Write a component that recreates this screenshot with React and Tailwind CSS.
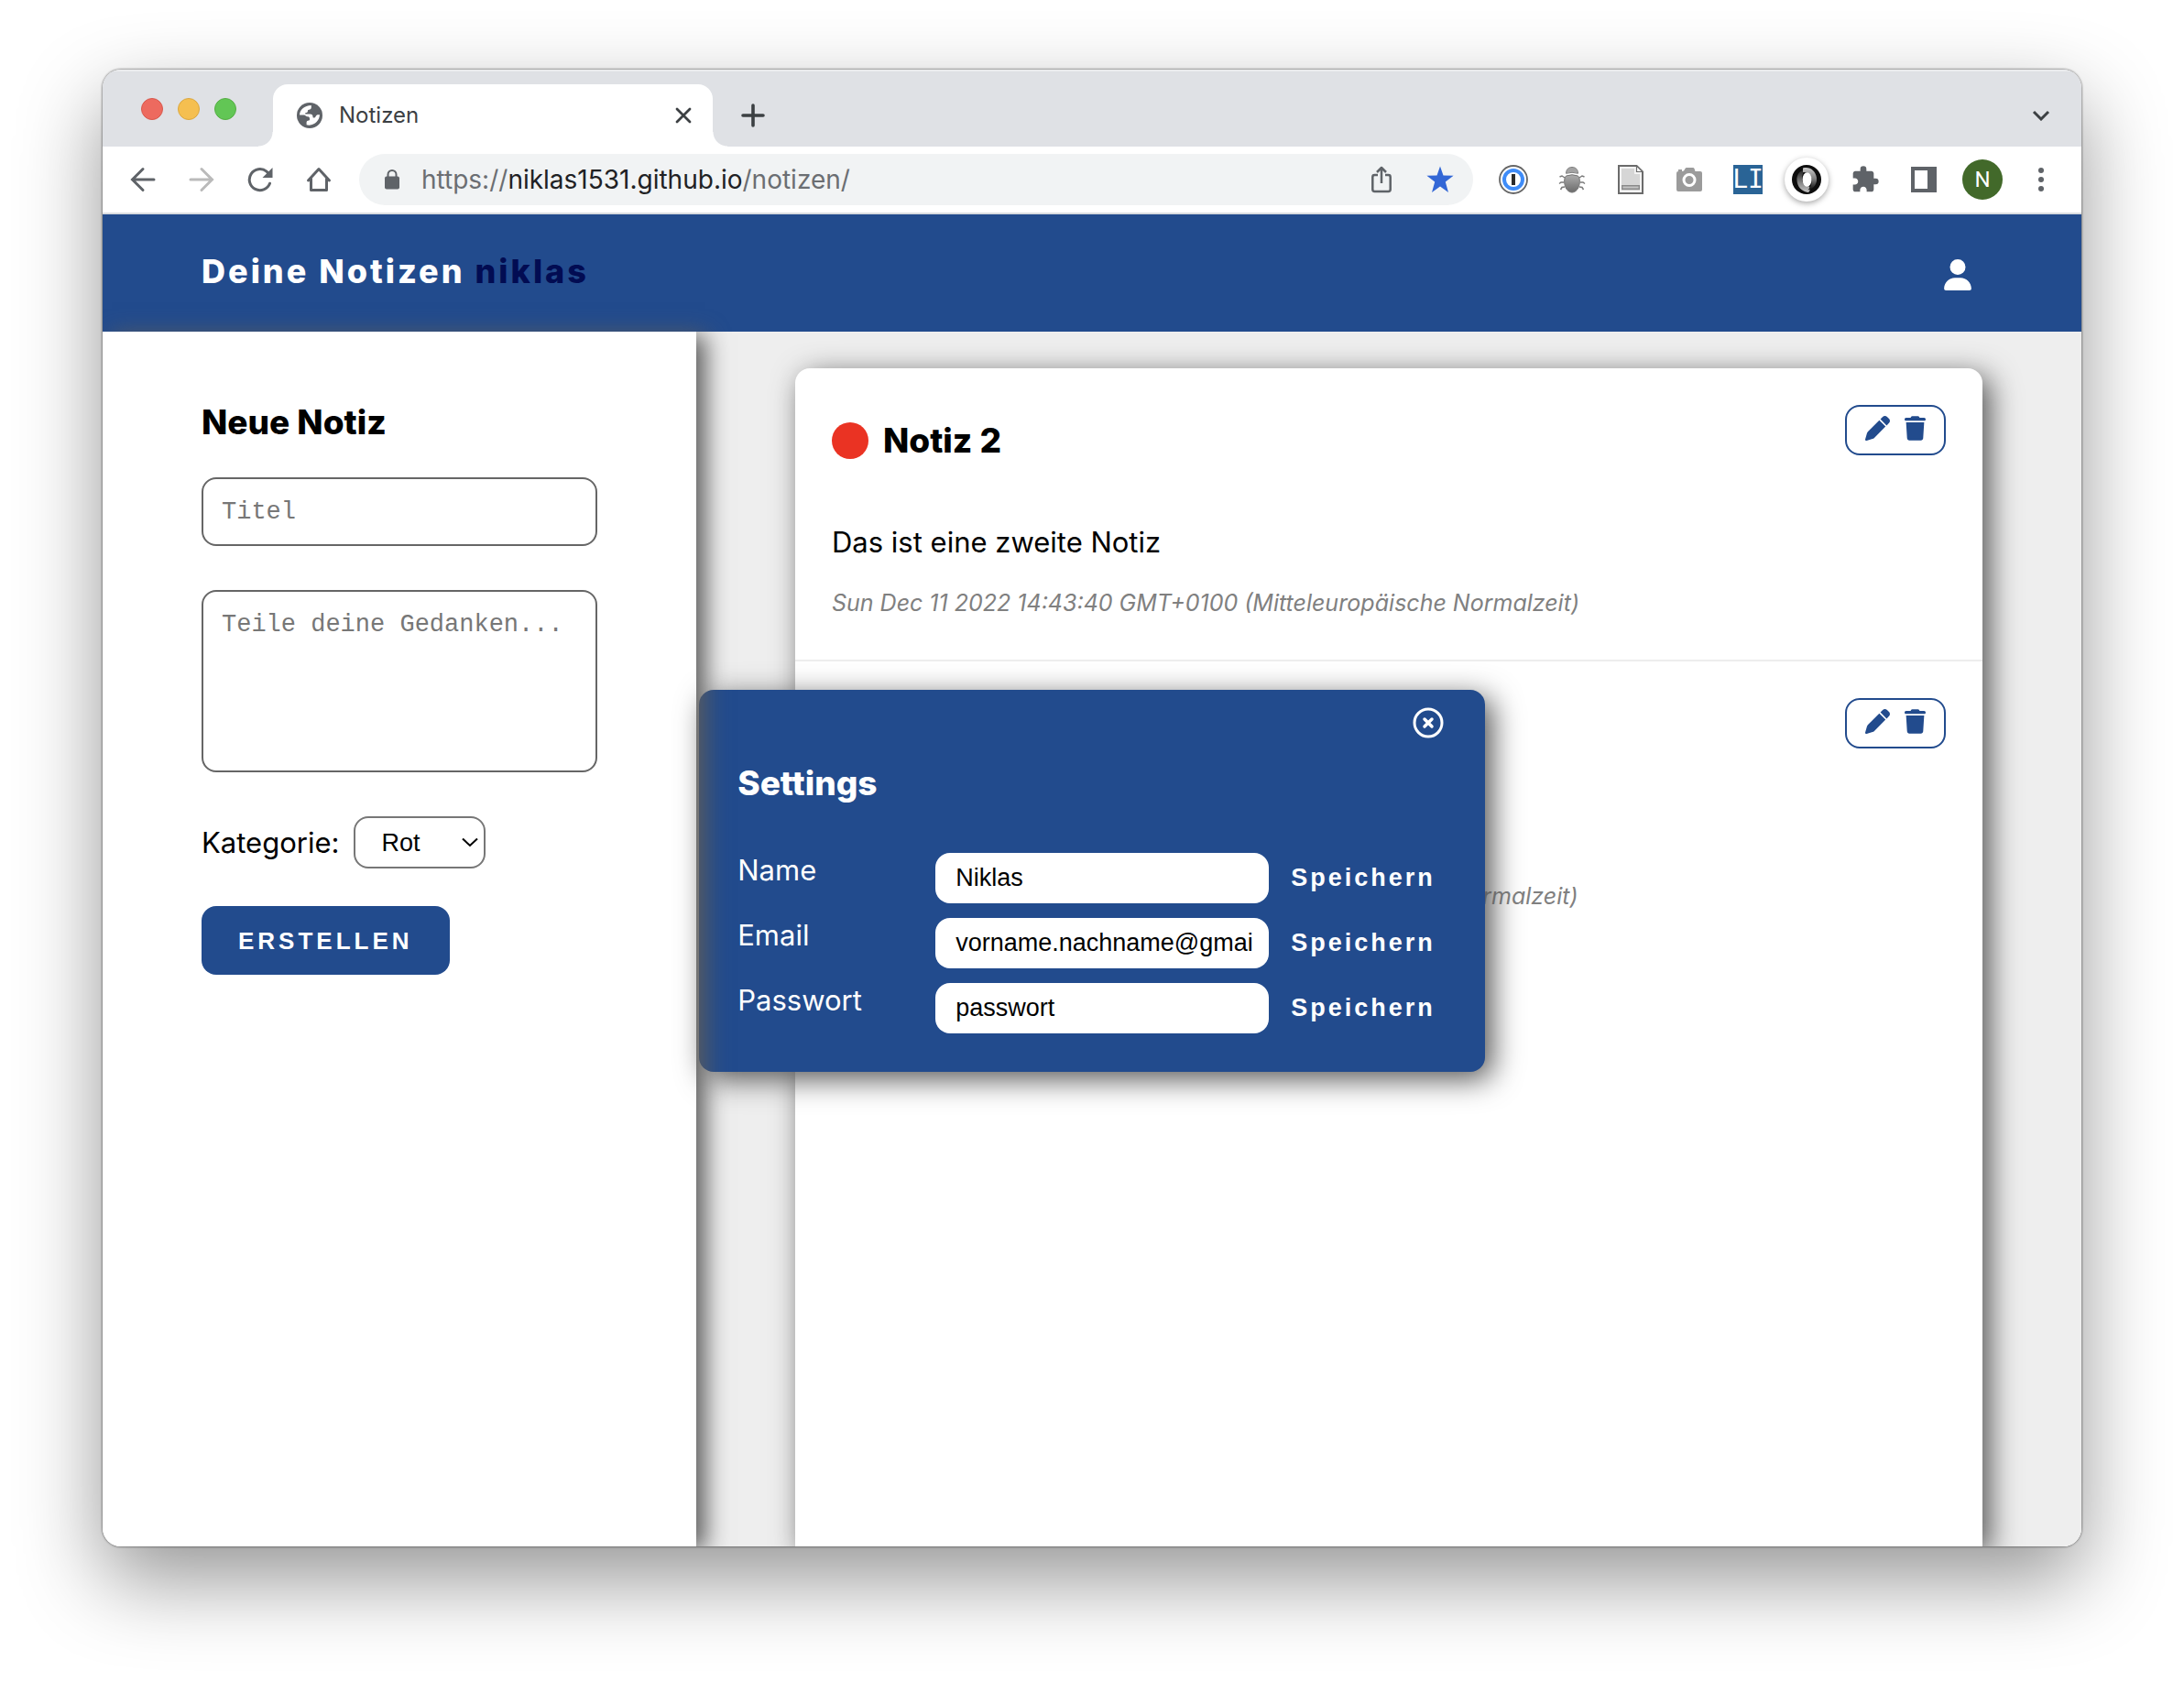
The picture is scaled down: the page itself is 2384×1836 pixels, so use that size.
import { FaPen, FaTrash, FaUser } from "react-icons/fa6";
import { MdExtension } from "react-icons/md";

const icon = { fill: "none", stroke: "currentColor", "aria-hidden": true };

function GlobeIcon() {
  return (
    <svg viewBox="0 0 28 28" className="h-7 w-7 shrink-0" aria-hidden="true">
      <circle cx="14" cy="14" r="14" fill="#5f6368" />
      <path
        d="M3 13.6C3.3 8 8 3.4 15.8 3.1v2.2c0 1.6-1 2.4-2.6 2.4-1.2 0-1.3.9-1.3 1.9 0 1.2-1.2 1.6-2.2 1.6-.9 0-.9 1.4.2 1.4h4.4c2.3 0 3.2 1.2 3.2 2.8 0 .9.5 1.2 1.5 1.2 1.600 0 1.500-2.200 3-3 .9-.5 2-.6 3-.3-.2 5.700-5 11.200-11.500 11.400-1.200 0-2-.2-2.900-.4v-2.700c0-1.400 1.200-2.200 2.400-2.200.8 0 1.100-.7 1.100-1.500 0-2.200-1.200-2.700-3-2.700-1.400 0-1.900-1.600-3.100-1.600z"
        fill="#fff"
      />
    </svg>
  );
}

function BackIcon() {
  return (
    <svg {...icon} viewBox="0 0 28 28" className="h-7 w-7" strokeWidth="3" strokeLinecap="round">
      <path d="M26 14H3M14 2.500 2.500 14 14 25.500" />
    </svg>
  );
}

function ForwardIcon() {
  return (
    <svg {...icon} viewBox="0 0 28 28" className="h-7 w-7" strokeWidth="3" strokeLinecap="round">
      <path d="M2 14h23M14 2.500 25.500 14 14 25.500" />
    </svg>
  );
}

function ReloadIcon() {
  return (
    <svg {...icon} viewBox="0 0 28 28" className="h-7 w-7" strokeWidth="3" strokeLinecap="round">
      <path d="M24.500 18.200A11.500 11.500 0 1 1 21 5.200l2 2" />
      <path d="M27.500 1v11h-11z" fill="currentColor" stroke="none" />
    </svg>
  );
}

function HomeIcon() {
  return (
    <svg {...icon} viewBox="0 0 28 28" className="h-7 w-7" strokeWidth="3" strokeLinejoin="round" strokeLinecap="round">
      <path d="M2.500 15 14 2.500 25.500 15M5.500 13v12.500h17V13" />
    </svg>
  );
}

function LockIcon() {
  return (
    <svg {...icon} viewBox="0 0 24 24" className="h-6 w-6 shrink-0 text-[#5f6368]" strokeWidth="2">
      <path d="M7.500 10V6.500a4.500 4.500 0 0 1 9 0V10" />
      <rect x="4" y="8.500" width="16" height="14" rx="2" fill="currentColor" stroke="none" />
    </svg>
  );
}

function ShareIcon() {
  return (
    <svg {...icon} viewBox="0 0 24 30" className="h-[30px] w-6" strokeWidth="2.500" strokeLinejoin="round">
      <path d="M8 10H4.500Q2.300 10 2.300 12.200v13.600q0 2.200 2.200 2.200h15q2.200 0 2.200-2.200V12.200q0-2.200-2.200-2.200H16M12 19V2.500M7 7l5-5 5 5" />
    </svg>
  );
}

function StarIcon() {
  return (
    <svg viewBox="0 0 30 30" className="h-[30px] w-[30px]" fill="#3367d6" aria-hidden="true">
      <path d="M15 .5l3.500 10.100 11.100.2-8.800 6.700 3.200 11.500L15 22.500 6 29l3.200-11.500L.4 10.800l11.100-.2z" />
    </svg>
  );
}

function KeyringIcon() {
  return (
    <svg viewBox="0 0 32 32" className="h-8 w-8" fill="none" aria-hidden="true">
      <circle cx="16" cy="16" r="15" fill="#fff" stroke="#666" strokeWidth="1.800" />
      <circle cx="16" cy="16" r="10" stroke="#3f8cf8" strokeWidth="4" />
      <path d="M14 10h4v12h-4z" fill="#2b2b2b" />
    </svg>
  );
}

function BugIcon() {
  return (
    <svg viewBox="0 0 30 30" className="h-[30px] w-[30px]" fill="none" aria-hidden="true">
      <defs>
        <linearGradient id="bug" x1="0" y1="0" x2="0" y2="1">
          <stop offset="0" stopColor="#adadad" />
          <stop offset="1" stopColor="#6b6b6b" />
        </linearGradient>
      </defs>
      <path d="M7 13l-3-2-2.500 1M6 18H3l-2 1.500M7 23l-3 .5L2.500 26M23 13l3-2 2.500 1M24 18h3l2 1.500M23 23l3 .5 1.500 2.500" stroke="#7a7a7a" strokeWidth="1.500" />
      <path d="M8.500 8.300C8.500 4 11 1.500 15 1.500s6.500 2.500 6.500 6.800q-6.500-2-13 0z" fill="#a3a3a3" stroke="#808080" />
      <path d="M8.500 11q6.500-2.500 13 0c2 2 2.300 6 1.500 9.500-1 5-4.500 8.500-8 8.500s-7-3.500-8-8.500C6.200 17 6.500 13 8.500 11z" fill="url(#bug)" stroke="#757575" />
    </svg>
  );
}

function PageIcon() {
  return (
    <svg viewBox="0 0 28 32" className="h-8 w-7" aria-hidden="true">
      <path d="M1 1h19.500L27 7.500V31H1z" fill="#f4f4f4" stroke="#6b6b6b" strokeWidth="2" />
      <path d="M4 4h14v6h6v18H4z" fill="#d6d6d6" />
      <path d="M20.500 1v6.500H27z" fill="#fff" stroke="#6b6b6b" strokeWidth="1.200" />
      <path d="M4.700 22.700h18.600v3.600H4.700z" fill="#c4c4c4" stroke="#8a8a8a" strokeWidth="1.400" />
    </svg>
  );
}

function CameraIcon() {
  return (
    <svg viewBox="0 0 30 28" className="h-7 w-[30px]" fill="#9b9b9b" aria-hidden="true">
      <path d="M3 5V3h4v2l2-.5L10.500 2Q11 1 12 1h7q1 0 1.500 1L21.500 5H27q2 0 2 2v18q0 2-2 2H3q-2 0-2-2V7q0-2 2-2z" />
      <circle cx="15" cy="14.500" r="6" stroke="#fff" strokeWidth="3" />
    </svg>
  );
}

function RingIcon() {
  return (
    <svg viewBox="0 0 32 32" className="h-8 w-8" aria-hidden="true">
      <defs>
        <linearGradient id="ringLeft" x1="0" y1="0" x2="0" y2="1">
          <stop offset="0" stopColor="#1c1c1c" />
          <stop offset="0.600" stopColor="#8a8a8a" />
          <stop offset="1" stopColor="#c4c4c4" />
        </linearGradient>
        <linearGradient id="ringRight" x1="0" y1="0" x2="0" y2="1">
          <stop offset="0" stopColor="#c9c9c9" />
          <stop offset="0.500" stopColor="#7d7d7d" />
          <stop offset="1" stopColor="#0a0a0a" />
        </linearGradient>
      </defs>
      <circle cx="16" cy="16" r="16" fill="#0d0d0d" />
      <path d="M14 5C8 6.500 5 11 5.500 17c.5 7 5 12 12.500 13 2-1.500 2-4 1-6.500-5-.5-8-4-8-8.500 0-4.500 1.500-8 5-10z" fill="url(#ringLeft)" />
      <path d="M12 3.500C20 1.500 26 7 27 14c.7 6-2.500 12-9.500 13.500C21 24 22 20 21.500 16 21 11 18 7.500 12 8z" fill="url(#ringRight)" />
      <ellipse cx="16.500" cy="16" rx="5" ry="7.800" fill="#fff" />
    </svg>
  );
}

function PanelIcon() {
  return (
    <svg viewBox="0 0 28 28" className="h-7 w-7" aria-hidden="true">
      <path d="M0 0h28v28H0z" fill="#5f6368" />
      <path d="M4 4h14v20H4z" fill="#fff" />
    </svg>
  );
}

function DotsIcon() {
  return (
    <svg viewBox="0 0 8 28" className="h-7 w-2" fill="#5f6368" aria-hidden="true">
      <circle cx="4" cy="4" r="3" />
      <circle cx="4" cy="14" r="3" />
      <circle cx="4" cy="24" r="3" />
    </svg>
  );
}

function CloseCircleIcon() {
  return (
    <svg {...icon} viewBox="0 0 40 40" className="h-10 w-10" strokeWidth="3" strokeLinecap="round">
      <circle cx="20" cy="20" r="15" />
      <path d="M16 16l8 8M24 16l-8 8" strokeWidth="3.500" />
    </svg>
  );
}

function BarButton({ label, className = "text-[#5f6368]", children }) {
  return (
    <button type="button" aria-label={label} className={`flex h-12 w-16 shrink-0 items-center justify-center ${className}`}>
      {children}
    </button>
  );
}

function TabStrip() {
  return (
    <div className="flex h-[84px] shrink-0 items-end bg-[#dfe1e5] shadow-[inset_0_2px_0_#ebecee]">
      <div className="mb-[29px] ml-[42px] flex gap-4">
        <span className="h-6 w-6 rounded-full border border-[#d8584c] bg-[#ed6a5f]" />
        <span className="h-6 w-6 rounded-full border border-[#dba73f] bg-[#f5bf50]" />
        <span className="h-6 w-6 rounded-full border border-[#54ad43] bg-[#62c655]" />
      </div>
      <span className="ml-6 h-4 w-4 bg-[radial-gradient(circle_at_0_0,#dfe1e5_15px,#ffffff_16px)]" />
      <div className="flex h-[68px] w-[480px] items-center rounded-t-2xl bg-white pr-5 pl-[26px] text-[#3c4043]">
        <GlobeIcon />
        <span className="ml-[18px] flex-1 text-[24px] leading-8">Notizen</span>
        <button type="button" aria-label="Tab schließen" className="flex h-6 w-6 items-center justify-center">
          <svg {...icon} viewBox="0 0 18 18" className="h-[18px] w-[18px]" strokeWidth="2.800" strokeLinecap="round">
            <path d="M2 2l14 14M16 2 2 16" />
          </svg>
        </button>
      </div>
      <span className="h-4 w-4 bg-[radial-gradient(circle_at_100%_0,#dfe1e5_15px,#ffffff_16px)]" />
      <div className="flex h-[68px] flex-1 items-center justify-between pr-7 pl-3 text-[#3c4043]">
        <button type="button" aria-label="Neuer Tab" className="flex h-8 w-8 items-center justify-center">
          <svg {...icon} viewBox="0 0 26 26" className="h-[26px] w-[26px]" strokeWidth="3.600" strokeLinecap="round">
            <path d="M13 2v22M2 13h22" />
          </svg>
        </button>
        <button type="button" aria-label="Tabs durchsuchen" className="flex h-8 w-8 items-center justify-center">
          <svg {...icon} viewBox="0 0 20 12" className="h-3 w-5" strokeWidth="3">
            <path d="M2 2l8 8 8-8" />
          </svg>
        </button>
      </div>
    </div>
  );
}

function Toolbar() {
  return (
    <div className="flex h-[74px] shrink-0 items-center border-b-2 border-[#dadce0] bg-white px-3">
      <BarButton label="Zurück"><BackIcon /></BarButton>
      <BarButton label="Vorwärts" className="text-[#bababa]"><ForwardIcon /></BarButton>
      <BarButton label="Neu laden"><ReloadIcon /></BarButton>
      <BarButton label="Startseite"><HomeIcon /></BarButton>
      <div className="mx-3 flex h-14 flex-1 items-center rounded-full bg-[#f1f3f4] pr-1 pl-6">
        <LockIcon />
        <div className="ml-5 flex-1 text-[28px] leading-9 text-[#6b6e72]">
          https://<span className="text-[#202124]">niklas1531.github.io</span>/notizen/
        </div>
        <BarButton label="Teilen"><ShareIcon /></BarButton>
        <BarButton label="Lesezeichen"><StarIcon /></BarButton>
      </div>
      <BarButton label="Passwörter"><KeyringIcon /></BarButton>
      <BarButton label="Debugger"><BugIcon /></BarButton>
      <BarButton label="Seite"><PageIcon /></BarButton>
      <BarButton label="Bildschirmfoto"><CameraIcon /></BarButton>
      <BarButton label="Lorem Ipsum">
        <span className="flex h-8 w-8 items-center justify-center bg-[#2a6496] font-['DejaVu_Sans_Mono',monospace] text-[28px] leading-8 text-white">
          LI
        </span>
      </BarButton>
      <BarButton label="JSON">
        <span className="flex h-12 w-12 items-center justify-center rounded-full bg-white shadow-[0_2px_6px_rgba(0,0,0,0.35)]">
          <RingIcon />
        </span>
      </BarButton>
      <BarButton label="Erweiterungen"><MdExtension className="h-8 w-8" aria-hidden="true" /></BarButton>
      <BarButton label="Seitenleiste"><PanelIcon /></BarButton>
      <BarButton label="Profil">
        <span className="flex h-11 w-11 items-center justify-center rounded-full bg-[#42692a] font-[Roboto,sans-serif] text-[24px] leading-8 text-white">
          N
        </span>
      </BarButton>
      <BarButton label="Menü"><DotsIcon /></BarButton>
    </div>
  );
}

function AppHeader() {
  return (
    <header className="flex h-32 shrink-0 items-center justify-between bg-[#224b8d] px-[108px]">
      <h1 className="pb-1 text-[36px] leading-11 font-extrabold tracking-[3px] text-white">
        Deine Notizen <span className="text-[#020c52]">niklas</span>
      </h1>
      <button type="button" aria-label="Profil öffnen" className="px-3 pt-1 text-white">
        <FaUser className="h-[34px] w-[30px]" />
      </button>
    </header>
  );
}

function NoteForm() {
  return (
    <form className="relative z-20 flex w-[30%] shrink-0 flex-col items-start px-[108px] pt-[77px] shadow-[10px_4px_24px_#5c5c5c]">
      <h2 className="text-[37px] leading-11 font-extrabold">Neue Notiz</h2>
      <input
        type="text"
        aria-label="Titel"
        placeholder="Titel"
        className="mt-[38px] h-[75px] w-full rounded-2xl border-2 border-[#666] px-5 font-['Liberation_Mono',monospace] text-[27px] leading-8 placeholder:text-[#777]"
      />
      <textarea
        aria-label="Notiz"
        placeholder="Teile deine Gedanken..."
        className="mt-12 h-[199px] w-full resize-none rounded-2xl border-2 border-[#666] px-5 py-5 font-['Liberation_Mono',monospace] text-[27px] leading-8 placeholder:text-[#777]"
      />
      <div className="mt-12 flex items-center gap-4">
        <label htmlFor="category" className="text-[31px] leading-[38px]">Kategorie:</label>
        <div className="grid w-36 items-center">
          <select
            id="category"
            defaultValue="Rot"
            className="col-start-1 row-start-1 h-[57px] w-full appearance-none rounded-2xl border-2 border-[#777] pl-7 font-['Liberation_Sans',sans-serif] text-[27px] leading-8"
          >
            <option>Rot</option>
            <option>Blau</option>
            <option>Grün</option>
          </select>
          <svg {...icon} viewBox="0 0 18 11" className="pointer-events-none col-start-1 row-start-1 mr-2 h-[11px] w-[18px] justify-self-end" strokeWidth="2">
            <path d="M1 1.500l8 7.500 8-7.500" />
          </svg>
        </div>
      </div>
      <button type="submit" className="mt-[41px] h-[75px] rounded-2xl bg-[#224b8d] px-10 font-['Liberation_Sans',sans-serif] text-[26px] leading-8 font-bold tracking-[4px] text-white">
        ERSTELLEN
      </button>
    </form>
  );
}

function Note({ title, text, date }) {
  return (
    <article className="border-b-2 border-[#ededed] px-10 pt-10 pb-[47px] last:border-b-0">
      <div className="flex items-start justify-between">
        <div className="mt-[17px] flex items-center gap-4">
          <span className="h-10 w-10 rounded-full bg-[#ea3323]" />
          <h3 className="text-[37px] leading-11 font-extrabold">{title}</h3>
        </div>
        <div className="flex h-[55px] items-center gap-4 rounded-2xl border-2 border-[#224b8d] px-5 pb-1 text-[#224b8d]">
          <button type="button" aria-label="Bearbeiten"><FaPen className="h-[27px] w-[27px]" /></button>
          <button type="button" aria-label="Löschen"><FaTrash className="h-[27px] w-[23px]" /></button>
        </div>
      </div>
      <p className="mt-[70px] text-[31px] leading-[38px]">{text}</p>
      <p className="mt-8 text-[25px] leading-[30px] text-[#808080] italic">{date}</p>
    </article>
  );
}

function SettingsRow({ id, label, value }) {
  return (
    <div className="flex items-start">
      <label htmlFor={id} className="w-54 text-[31px] leading-[38px]">{label}</label>
      <input
        id={id}
        type="text"
        defaultValue={value}
        className="h-[55px] w-[364px] rounded-2xl bg-white pr-4 pl-[22px] font-['Liberation_Sans',sans-serif] text-[27px] leading-8 text-black"
      />
      <button type="button" className="ml-3 h-[55px] px-3 font-['Liberation_Sans',sans-serif] text-[27px] leading-8 font-bold tracking-[3px]">
        Speichern
      </button>
    </div>
  );
}

function SettingsDialog() {
  return (
    <div className="absolute inset-0 z-10 flex items-center justify-center">
      <section role="dialog" aria-label="Settings" className="mb-32 flex flex-col rounded-2xl bg-[#224b8d] px-[42px] pt-4 pb-[42px] text-white shadow-[8px_8px_32px_#555]">
        <button type="button" aria-label="Schließen" className="self-end">
          <CloseCircleIcon />
        </button>
        <h2 className="mt-6 text-[37px] leading-11 font-extrabold">Settings</h2>
        <div className="mt-[54px] flex flex-col gap-4">
          <SettingsRow id="name" label="Name" value="Niklas" />
          <SettingsRow id="email" label="Email" value="vorname.nachname@gmai" />
          <SettingsRow id="password" label="Passwort" value="passwort" />
        </div>
      </section>
    </div>
  );
}

export default function App() {
  return (
    <div className="flex min-h-screen flex-col bg-white px-28 pt-[76px] pb-[148px] font-[Inter,sans-serif] text-black">
      <div className="flex flex-1 flex-col overflow-hidden rounded-[20px] shadow-[0_0_2px_1px_rgba(0,0,0,0.35),0_36px_90px_rgba(0,0,0,0.42)]">
        <TabStrip />
        <Toolbar />
        <AppHeader />
        <div className="relative flex flex-1 bg-white">
          <NoteForm />
          <main className="flex flex-1 flex-col bg-[#eeeeee] px-[108px] pt-10">
            <div className="flex-1 rounded-t-2xl bg-white shadow-[8px_8px_32px_#555]">
              <Note
                title="Notiz 2"
                text="Das ist eine zweite Notiz"
                date="Sun Dec 11 2022 14:43:40 GMT+0100 (Mitteleuropäische Normalzeit)"
              />
              <Note
                title="Notiz 1"
                text="Das ist eine Notiz"
                date="Sun Dec 11 2022 14:42:56 GMT+0100 (Mitteleuropäische Normalzeit)"
              />
            </div>
          </main>
          <SettingsDialog />
        </div>
      </div>
    </div>
  );
}
